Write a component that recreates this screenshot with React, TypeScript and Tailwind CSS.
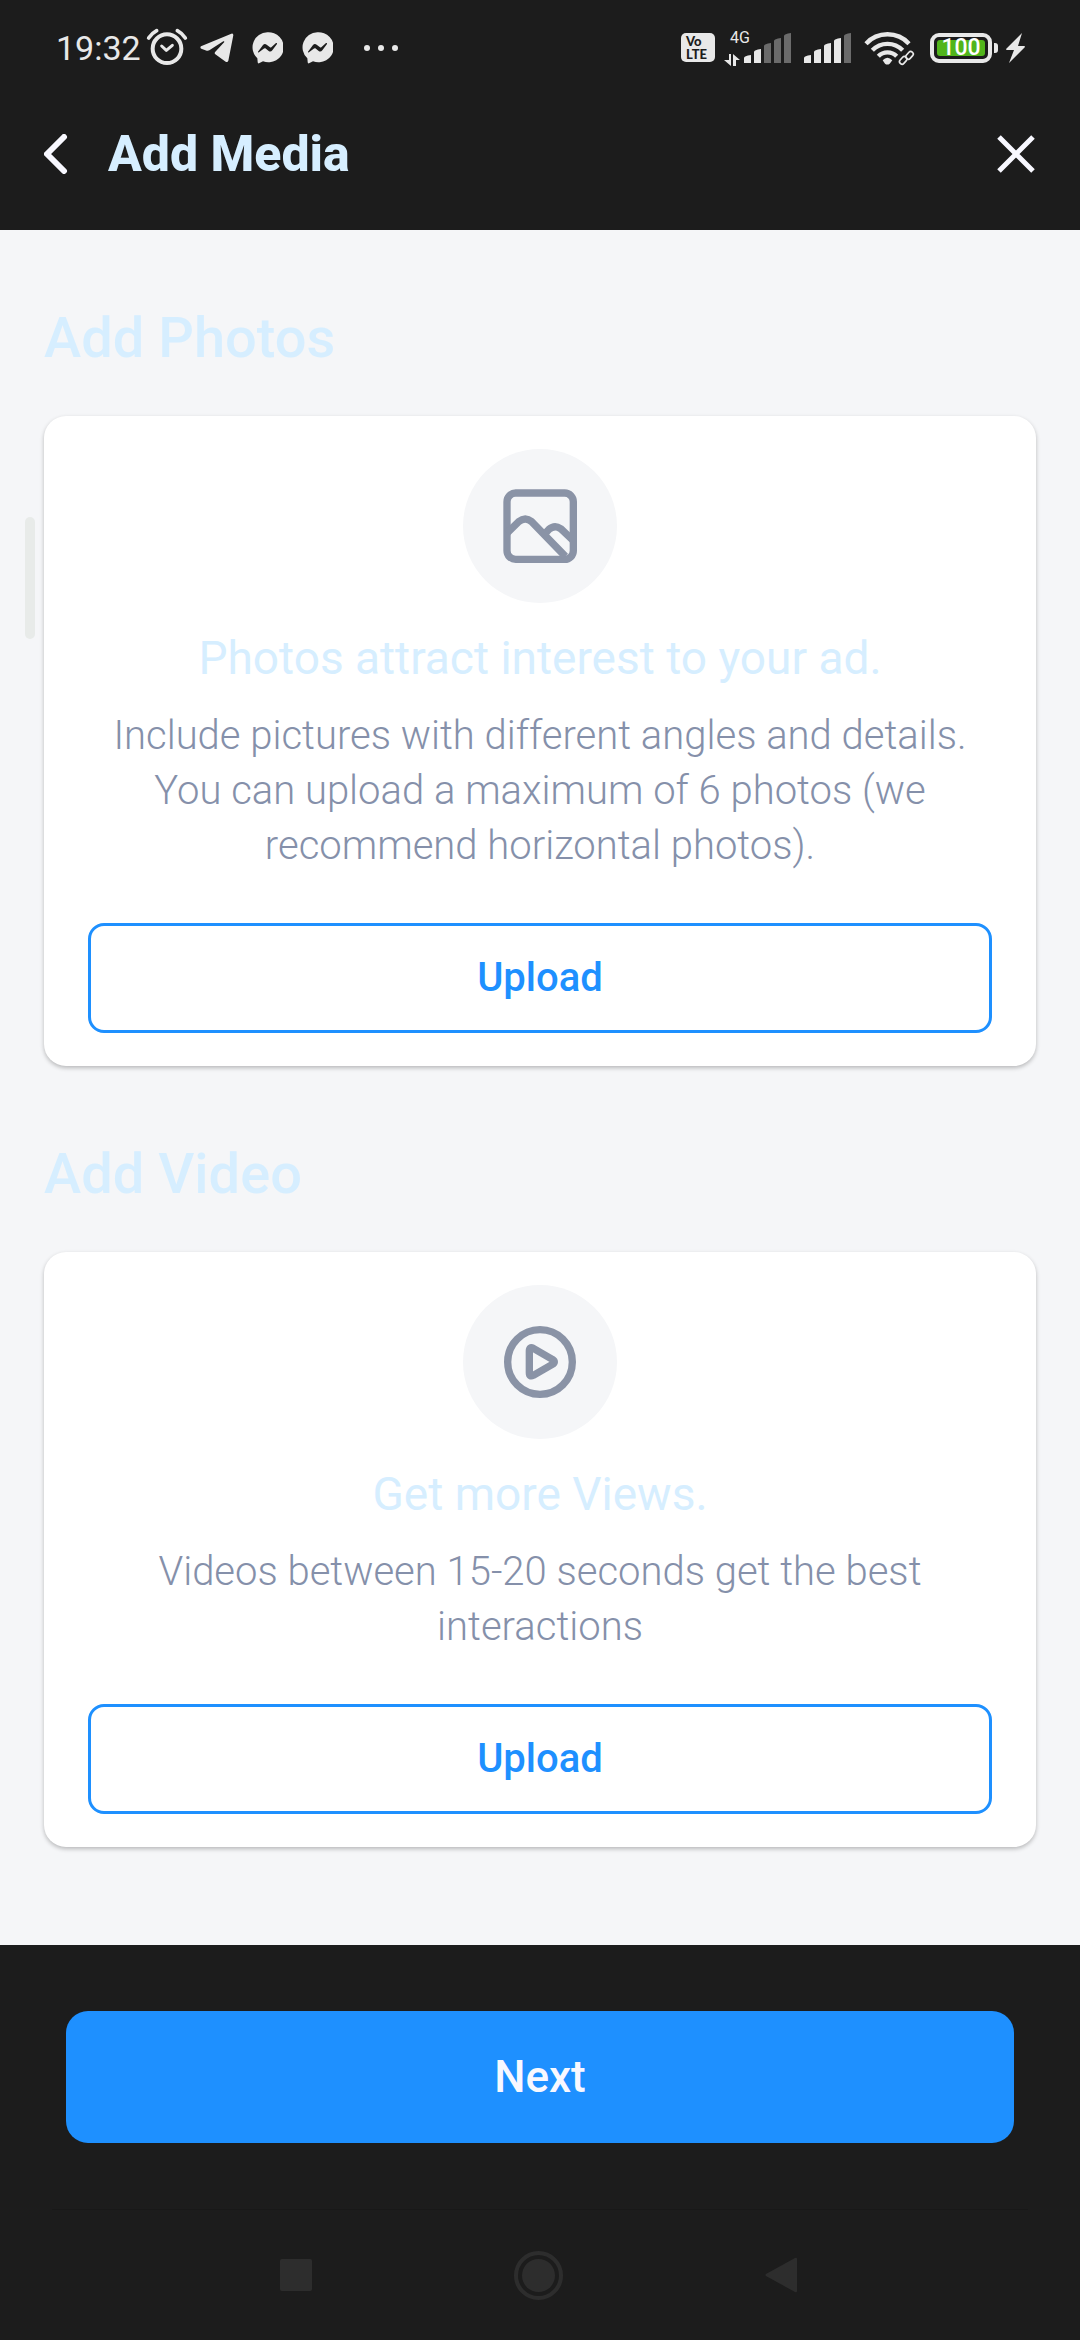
import type { ReactNode } from "react";

function AlarmIcon() {
  return (
    <svg className="h-10 w-[42px]" viewBox="317 53 126 120" fill="none" stroke="#e8e8e8" strokeLinecap="round" strokeLinejoin="round" aria-hidden="true">
      <circle cx="380" cy="115" r="43" strokeWidth="12" />
      <path d="M364 107 L378 120 L396 105" strokeWidth="9" />
      <path d="M325 83 Q334 69 349 61 M411 61 Q426 69 435 83" strokeWidth="11" />
    </svg>
  );
}

function TelegramIcon() {
  return (
    <svg className="h-[30px] w-[34px]" viewBox="484 70 102 90" fill="#e8e8e8" aria-hidden="true">
      <path d="M487 110 L578 72 q6-2 6 5 L569 153 q-2 6-8 3 L530 134 q-4-4 0-8 L557 97 q0-3-3-2 L512 122 q-3 2-8 1 L488 117 q-5-3-1-7z" />
    </svg>
  );
}

function MessengerIcon() {
  return (
    <svg className="h-8 w-[31px]" viewBox="638 65 93 96" aria-hidden="true">
      <path fill="#e8e8e8" d="M684 66 a46 45 0 1 1-13 87 L659 159 q-4 1-4-4 L654 144 A45 45 0 0 1 684 66z" />
      <path fill="#1c1c1c" d="M656 124 L671 104 q5-5 11-1 L692 111 q2 1 4 0 L710 98 q4-1 3 3 L699 120 q-5 6-11 2 L678 114 q-3-1-5 1 L659 126 q-4 1-3-2z" />
    </svg>
  );
}

function SignalBars({ active }: { active: number }) {
  const bars = ["M0 31 v-5 q0-2 7-3 v8z", "M10 31 v-11 q0-2 7-3 v14z", "M20 31 v-17 q0-2 7-3 v20z", "M30 31 v-22 q0-2 7-3 v25z", "M40 31 v-27 q0-2 7-3 v30z"];
  return (
    <svg className="h-8 w-12" viewBox="0 0 48 32" aria-hidden="true">
      {bars.map((d, i) => (
        <path key={d} d={d} fill={i < active ? "#e8e8e8" : "#6b6b6b"} />
      ))}
    </svg>
  );
}

function WifiIcon() {
  return (
    <svg className="h-9 w-[51px]" viewBox="613 58 153 108" fill="none" stroke="#e8e8e8" aria-hidden="true">
      <path d="M619 99 A88 88 0 0 1 748 99" strokeWidth="13" />
      <path d="M638 119 A63 63 0 0 1 729 119" strokeWidth="13" />
      <path d="M656 137 A38 38 0 0 1 711 137" strokeWidth="13" />
      <path d="M669 149 Q683 134 698 149 L690 159 q-7 5-14 0z" fill="#e8e8e8" stroke="none" />
      <g stroke="#1c1c1c" strokeWidth="13">
        <rect x="716" y="137" width="28" height="17" rx="8" transform="rotate(-48 730 146)" />
      </g>
      <g strokeWidth="5">
        <rect x="718" y="142" width="25" height="15" rx="7" transform="rotate(-48 730 149)" />
        <rect x="737" y="127" width="25" height="15" rx="7" transform="rotate(-48 749 134)" />
      </g>
    </svg>
  );
}

function StatusBar() {
  return (
    <div className="flex h-[77px] items-center justify-between pt-[18px] pr-[54px] pl-14 text-[#e8e8e8]">
      <div className="flex items-center">
        <span className="w-[86px] text-[34px] leading-10">19:32</span>
        <span className="ml-1"><AlarmIcon /></span>
        <span className="ml-3"><TelegramIcon /></span>
        <span className="ml-[18px]"><MessengerIcon /></span>
        <span className="ml-[19px]"><MessengerIcon /></span>
        <span className="ml-[31px] flex gap-2">
          <i className="size-1.5 rounded-full bg-[#e8e8e8]" />
          <i className="size-1.5 rounded-full bg-[#e8e8e8]" />
          <i className="size-1.5 rounded-full bg-[#e8e8e8]" />
        </span>
      </div>
      <div className="flex items-center">
        <div className="flex h-[29px] w-[34px] flex-col items-start justify-center rounded-[5px] bg-[#e8e8e8] pl-[5px] font-[Lato,sans-serif] text-[13px] leading-[13px] font-black text-[#1c1c1c]">
          <span>Vo</span>
          <span>LTE</span>
        </div>
        <div className="ml-[9px] flex h-9 w-5 flex-col justify-between">
          <span className="pl-[6px] text-[16px] leading-4">4G</span>
          <svg className="h-3 w-[17px]" viewBox="0 0 17 12" fill="#e8e8e8" aria-hidden="true">
            <path d="M5 0h2v12L0 6h5zM9 12V0l7 6h-4v6z" />
          </svg>
        </div>
        <SignalBars active={2} />
        <span className="ml-3"><SignalBars active={4} /></span>
        <span className="ml-3"><WifiIcon /></span>
        <div className="ml-[15px] flex h-[30px] w-[62px] rounded-[9px] border-4 border-[#e8e8e8] p-[3px]">
          <span className="flex flex-1 items-center justify-center rounded-[3px] bg-[#51b51b] text-[23px] leading-4 font-medium text-white">100</span>
        </div>
        <i className="ml-0.5 h-[10px] w-1 rounded-r-[3px] bg-[#e8e8e8]" />
        <svg className="ml-2 h-[30px] w-5" viewBox="0 0 20 30" fill="#e8e8e8" aria-hidden="true">
          <path d="M16 0 L0 16 q0 1 1 1 h7 L3 30 L19 14 q0-1-1-1 h-6z" />
        </svg>
      </div>
    </div>
  );
}

function PhotoIcon() {
  return (
    <svg className="size-[76px]" viewBox="186 175 228 228" fill="none" stroke="#8a93a6" strokeWidth="22" aria-hidden="true">
      <rect x="201" y="190" width="199" height="199" rx="26" />
      <path d="M201 310 L236 276 Q256 260 275 276 L376 380" />
      <path d="M316 311 L327 299 Q344 284 362 297 L400 333" />
    </svg>
  );
}

function PlayIcon() {
  return (
    <svg className="size-[76px]" viewBox="186 164 228 228" fill="none" stroke="#8a93a6" strokeWidth="22" strokeLinejoin="round" aria-hidden="true">
      <circle cx="300" cy="278" r="97" />
      <path d="M268 245 Q268 231 280 237 L337 270 Q349 278 337 285 L280 318 Q268 324 268 310z" />
    </svg>
  );
}

function MediaSection({ id, heading, icon, title, text }: { id: string; heading: string; icon: ReactNode; title: string; text: string }) {
  return (
    <section aria-labelledby={id} className="pt-[72px]">
      <h2 id={id} className="text-[56px] leading-[72px] font-medium text-[#d6eeff]">{heading}</h2>
      <div className="mt-[42px] flex flex-col items-center rounded-[22px] bg-white px-11 pt-[33px] pb-[33px] shadow-[0_2px_4px_rgba(0,0,0,0.25)]">
        <div className="flex size-[154px] items-center justify-center rounded-full bg-[#f5f6f8]">{icon}</div>
        <h3 className="mt-[25px] text-center text-[46px] leading-[60px] text-[#d6eeff]">{title}</h3>
        <p className="mt-5 text-center text-[40px] leading-[55px] font-light text-[#8590aa]">{text}</p>
        <button type="button" aria-label={`Upload: ${heading}`} className="mt-[50px] h-[110px] w-full rounded-[16px] border-3 border-[#1e90ff] text-[40px] font-medium text-[#1e90ff]">
          Upload
        </button>
      </div>
    </section>
  );
}

export default function App() {
  return (
    <div className="relative flex min-h-screen flex-col bg-[#1c1c1c] font-[Roboto,sans-serif]">
      <header>
        <StatusBar />
        <div className="flex h-[153px] items-center px-11">
          <button type="button" aria-label="Back">
            <svg className="h-10 w-6" viewBox="0 0 24 40" fill="none" stroke="#f8f8ff" strokeWidth="6" strokeLinecap="round" strokeLinejoin="round" aria-hidden="true">
              <path d="M20 3 L3 20 L20 37" />
            </svg>
          </button>
          <h1 className="ml-10 flex-1 text-[50px] leading-[60px] font-extrabold text-[#d6eeff]">Add Media</h1>
          <button type="button" aria-label="Close">
            <svg className="size-10" viewBox="0 0 40 40" fill="none" stroke="#f8f8ff" strokeWidth="5" aria-hidden="true">
              <path d="M3 3 L37 37 M37 3 L3 37" />
            </svg>
          </button>
        </div>
      </header>

      <main className="flex-1 bg-[#f5f6f8] px-11 pb-[98px]">
        <MediaSection
          id="photos"
          heading="Add Photos"
          icon={<PhotoIcon />}
          title="Photos attract interest to your ad."
          text="Include pictures with different angles and details. You can upload a maximum of 6 photos (we recommend horizontal photos)."
        />
        <MediaSection
          id="video"
          heading="Add Video"
          icon={<PlayIcon />}
          title="Get more Views."
          text="Videos between 15-20 seconds get the best interactions"
        />
      </main>

      <footer>
        <div className="px-[66px] pt-[66px] pb-[66px]">
          <button type="button" className="h-[132px] w-full rounded-[22px] bg-[#1e90ff] text-[44px] font-medium text-[#f8f8ff]">
            Next
          </button>
        </div>
        <div className="mx-[52px] h-px bg-[#181818]" />
        <nav aria-label="System" className="flex h-[130px] items-center justify-between pr-[283px] pl-[280px]">
          <button type="button" aria-label="Recent apps" className="size-8 rounded-[2px] bg-[#2d2d2d]" />
          <button type="button" aria-label="Home" className="flex size-[49px] items-center justify-center rounded-full border-4 border-[#2d2d2d]">
            <i className="size-[33px] rounded-full bg-[#2d2d2d]" />
          </button>
          <button type="button" aria-label="Navigate back">
            <svg className="h-9 w-8" viewBox="0 0 32 36" fill="#2d2d2d" aria-hidden="true">
              <path d="M30 1 q2-1 2 1 V34 q0 2-2 1 L1 19 q-1-1 0-2z" />
            </svg>
          </button>
        </nav>
      </footer>

      <i className="absolute top-[517px] left-[25px] h-[122px] w-[10px] rounded-full bg-[#e8ebe9]" aria-hidden="true" />
    </div>
  );
}
